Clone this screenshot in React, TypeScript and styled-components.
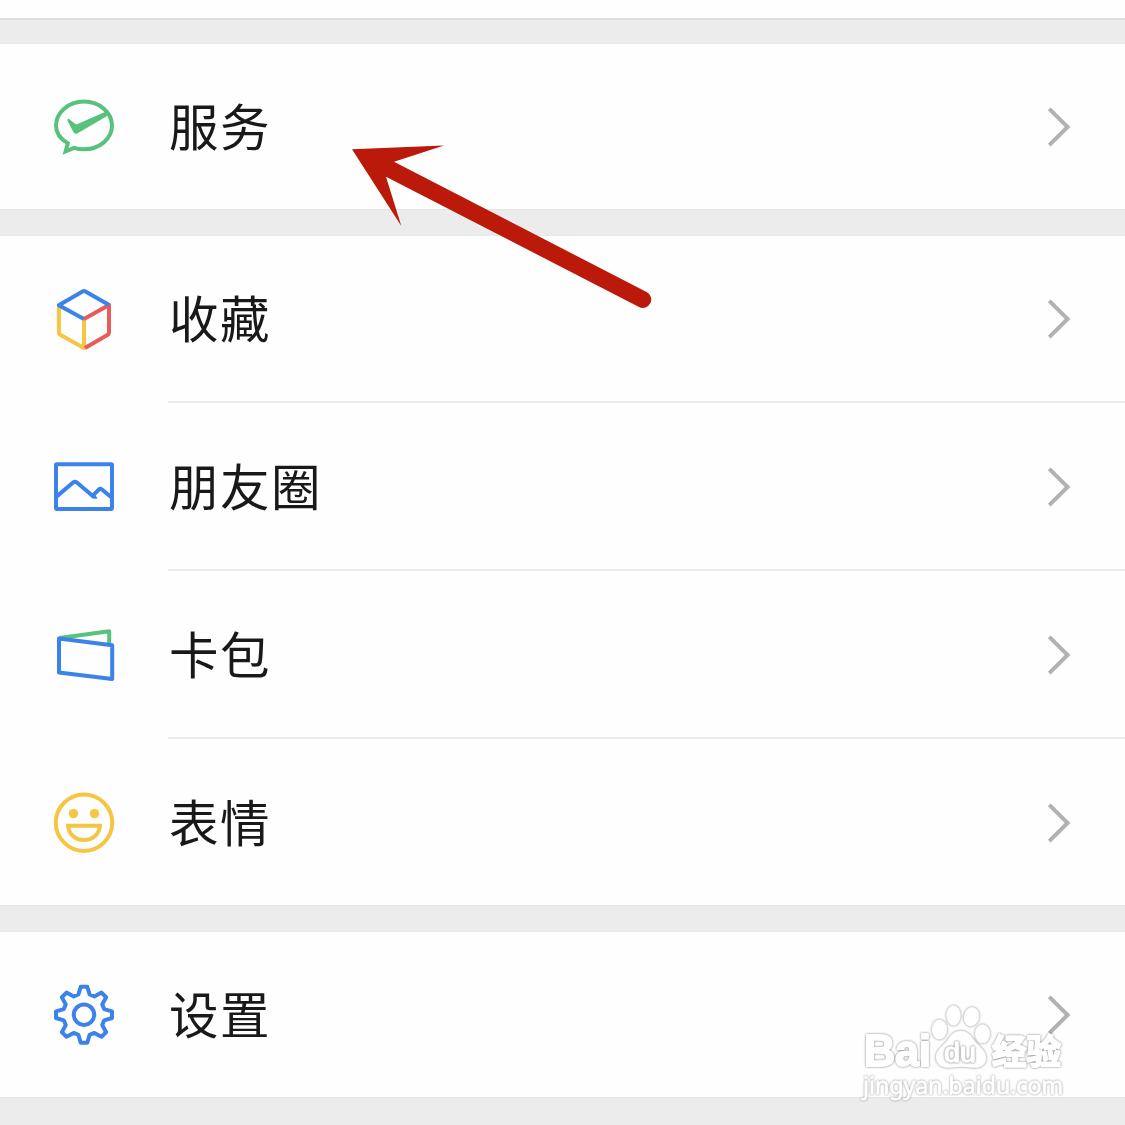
import React from "react";
import styled, { createGlobalStyle } from "styled-components";

const GlobalStyle = createGlobalStyle`
  *, *::before, *::after { box-sizing: border-box; }
  body {
    margin: 0;
    background: #ececec;
    font-family: "Noto Sans CJK SC", "Noto Sans", sans-serif;
  }
`;

const Screen = styled.main`
  position: relative;
  width: 1125px;
  height: 1125px;
  overflow: hidden;
  display: flex;
  flex-direction: column;
  background: #ececec;
`;

const HeaderEdge = styled.div`
  height: 20px;
  flex: none;
  background: #fefefe;
  border-bottom: 2px solid #dedede;
  margin-bottom: 24px;
`;

const Group = styled.section<{ $gap: number }>`
  flex: none;
  background: #fefefe;
  margin-bottom: ${(p) => p.$gap}px;
  box-shadow: 0 1px 0 #e5e5e5, 0 -1px 0 #e9e9e9;
`;

const Row = styled.div<{ $height: number }>`
  height: ${(p) => p.$height}px;
  display: flex;
  align-items: stretch;
  padding-left: 48px;
`;

const IconCell = styled.div`
  width: 120px;
  display: flex;
  align-items: flex-start;
  padding-top: 47px;
`;

const Body = styled.div<{ $divided: boolean }>`
  flex: 1;
  display: flex;
  align-items: flex-start;
  justify-content: space-between;
  padding: 46px 54px 0 1px;
  margin-bottom: 1px;
  box-shadow: ${(p) => (p.$divided ? "inset 0 -2px 0 #ebebeb" : "none")};
`;

const Label = styled.span`
  font-size: 49.5px;
  line-height: 70px;
  letter-spacing: 1.5px;
  color: #191919;
  white-space: nowrap;
`;

const Icon = styled.svg`
  width: 72px;
  height: 72px;
  display: block;
  fill: none;
  stroke-width: 4;
  stroke-linejoin: round;
`;

const Chevron = styled.svg`
  width: 24px;
  height: 42px;
  margin-top: 16px;
  fill: none;
  stroke: #b2b2b2;
  stroke-width: 4;
`;

const Arrow = styled.svg`
  position: absolute;
  left: 340px;
  top: 130px;
  width: 330px;
  height: 190px;
  fill: #bb190a;
`;

const Watermark = styled.svg`
  position: absolute;
  left: 850px;
  top: 985px;
  width: 275px;
  height: 140px;
  fill: #ffffff;
  stroke: #ffffff;
  stroke-linejoin: round;
`;

const Glow = styled.g<{ $stroke: number; $alpha: number }>`
  stroke-width: ${(p) => p.$stroke};
  filter: drop-shadow(0 0 1px rgba(0, 0, 0, ${(p) => p.$alpha}));
`;

const BLUE = "#3b82ea";
const GREEN = "#57c27d";
const YELLOW = "#f6c544";
const RED = "#e85b5a";

const gearPath = (() => {
  const tooth = [[-5.6, 20.2], [-3.3, 28], [3.3, 28], [5.6, 20.2]];
  const points: string[] = [];
  for (let i = 0; i < 8; i++) {
    const a = (i * Math.PI) / 4;
    tooth.forEach(([u, r]) => {
      const x = 36 + u * Math.cos(a) + r * Math.sin(a);
      const y = 35.7 + u * Math.sin(a) - r * Math.cos(a);
      points.push(`${x.toFixed(2)} ${y.toFixed(2)}`);
    });
  }
  return `M${points.join("L")}Z`;
})();

const PayIcon = () => (
  <Icon viewBox="0 0 72 72" stroke={GREEN}>
    <path
      strokeLinejoin="miter"
      d="M19.8 52.2C12 48 8 41.6 8 34.6C8 21.4 20.4 10.6 36 10.6S64 21.4 64 34.6S51.6 58.3 36 58.3C32.4 58.3 29 57.8 26 56.8L17.6 60.3Z"
    />
    <path
      fill={GREEN}
      stroke="none"
      d="M21.4 28.3L27.4 32.9Q28.4 33.6 29.6 33.1L58.6 20.3L61.3 23.8L29.2 42.4Q27 43.7 25.7 41.4L19.6 30Q18.9 26.9 21.4 28.3Z"
    />
  </Icon>
);

const CubeIcon = () => (
  <Icon viewBox="0 0 72 72">
    <path stroke={YELLOW} d="M10.9 22.5V49.5Q10.9 51 12.2 51.8L36 65V36" />
    <path stroke={RED} d="M36 36L61 22V49.5Q61 51 59.8 51.8L37 65" />
    <path stroke={BLUE} d="M36 36L10.8 22.3L34.5 8.4Q36 7.6 37.5 8.4L61.2 22" />
  </Icon>
);

const PictureIcon = () => (
  <Icon viewBox="0 0 72 72" stroke={BLUE}>
    <rect x="8" y="13.2" width="56" height="44.7" rx="0.8" />
    <path d="M8.5 45.6L25.4 31.3Q27 30.1 28.6 31.3L44.5 44.8L51 38.3Q52.3 37.2 53.6 38.3L63.7 46.5" />
    <path fill={BLUE} stroke="none" d="M41 44L47 43L49.5 47.7H45Z" />
  </Icon>
);

const CardsIcon = () => (
  <Icon viewBox="0 0 72 72">
    <path stroke={GREEN} d="M11.4 18.9L61.2 12.3V25" />
    <path stroke={BLUE} d="M11 19.5L64.2 26.2V60L11 53.4Z" />
  </Icon>
);

const StickerIcon = () => (
  <Icon viewBox="0 0 72 72" stroke={YELLOW}>
    <circle cx="36" cy="35.7" r="28.2" />
    <g fill={YELLOW} stroke="none">
      <circle cx="25.5" cy="26.6" r="4.7" />
      <circle cx="46.5" cy="26.6" r="4.7" />
    </g>
    <path strokeLinejoin="miter" d="M20.1 38.8H51.9C51.3 47 44.8 53.1 36 53.1S20.7 47 20.1 38.8Z" />
  </Icon>
);

const GearIcon = () => (
  <Icon viewBox="0 0 72 72" stroke={BLUE}>
    <path d={gearPath} />
    <circle cx="36" cy="35.7" r="10.2" />
  </Icon>
);

type Item = { label: string; icon: React.ReactNode; height: number };

const groups: { gap: number; items: Item[] }[] = [
  { gap: 27, items: [{ label: "服务", icon: <PayIcon />, height: 165 }] },
  {
    gap: 27,
    items: [
      { label: "收藏", icon: <CubeIcon />, height: 168 },
      { label: "朋友圈", icon: <PictureIcon />, height: 168 },
      { label: "卡包", icon: <CardsIcon />, height: 168 },
      { label: "表情", icon: <StickerIcon />, height: 165 },
    ],
  },
  { gap: 0, items: [{ label: "设置", icon: <GearIcon />, height: 165 }] },
];

export default function App() {
  return (
    <>
      <GlobalStyle />
      <Screen>
        <HeaderEdge />
        {groups.map((group, g) => (
          <Group key={g} $gap={group.gap}>
            {group.items.map((item, i) => (
              <Row key={item.label} $height={item.height}>
                <IconCell>{item.icon}</IconCell>
                <Body $divided={i < group.items.length - 1}>
                  <Label>{item.label}</Label>
                  <Chevron viewBox="0 0 24 42">
                    <path d="M2.3 2.8L20.6 21L2.3 39.2" />
                  </Chevron>
                </Body>
              </Row>
            ))}
          </Group>
        ))}
        <Arrow viewBox="0 0 330 190">
          <path d="M12 19.3L104 15.5L54 31.7L306.6 162A8.3 8.3 0 0 1 299 177L46 46.7L61.3 96Z" />
        </Arrow>
        <Watermark viewBox="0 0 275 140">
          <Glow $stroke={2} $alpha={0.5}>
            <text x="14" y="81" fontFamily="Liberation Sans" fontWeight="700" fontSize="44" textLength="67" lengthAdjust="spacingAndGlyphs">Bai</text>
            <text x="142" y="79" fontFamily="Noto Sans CJK SC" fontWeight="700" fontSize="34.5">经验</text>
          </Glow>
          <Glow $stroke={0.5} $alpha={0.5}>
            <ellipse cx="89.5" cy="44.5" rx="7.5" ry="9.8" />
            <ellipse cx="103.5" cy="30.5" rx="7" ry="10" />
            <ellipse cx="121.5" cy="31.7" rx="7.5" ry="9.5" transform="rotate(12 121.5 31.7)" />
            <ellipse cx="132.5" cy="48.8" rx="7.5" ry="9.3" />
            <path d="M111 46C118 46 121 51 125 56.5C130 62 136 66 136 73C136 80 130 83.5 123 82.5C115 81.5 107 81.5 100 82.5C92 83.5 86 79 86 72C86 65 93 61 97 56C101 50 104 46 111 46Z" />
          </Glow>
          <Glow $stroke={1.4} $alpha={0.6}>
            <text x="94" y="77" fontFamily="Liberation Sans" fontSize="27" textLength="32" lengthAdjust="spacingAndGlyphs">du</text>
          </Glow>
          <Glow $stroke={0.8} $alpha={0.42}>
            <text x="13" y="108.5" fontFamily="Noto Sans" fontSize="24" textLength="200" lengthAdjust="spacingAndGlyphs">jingyan.baidu.com</text>
          </Glow>
        </Watermark>
      </Screen>
    </>
  );
}
